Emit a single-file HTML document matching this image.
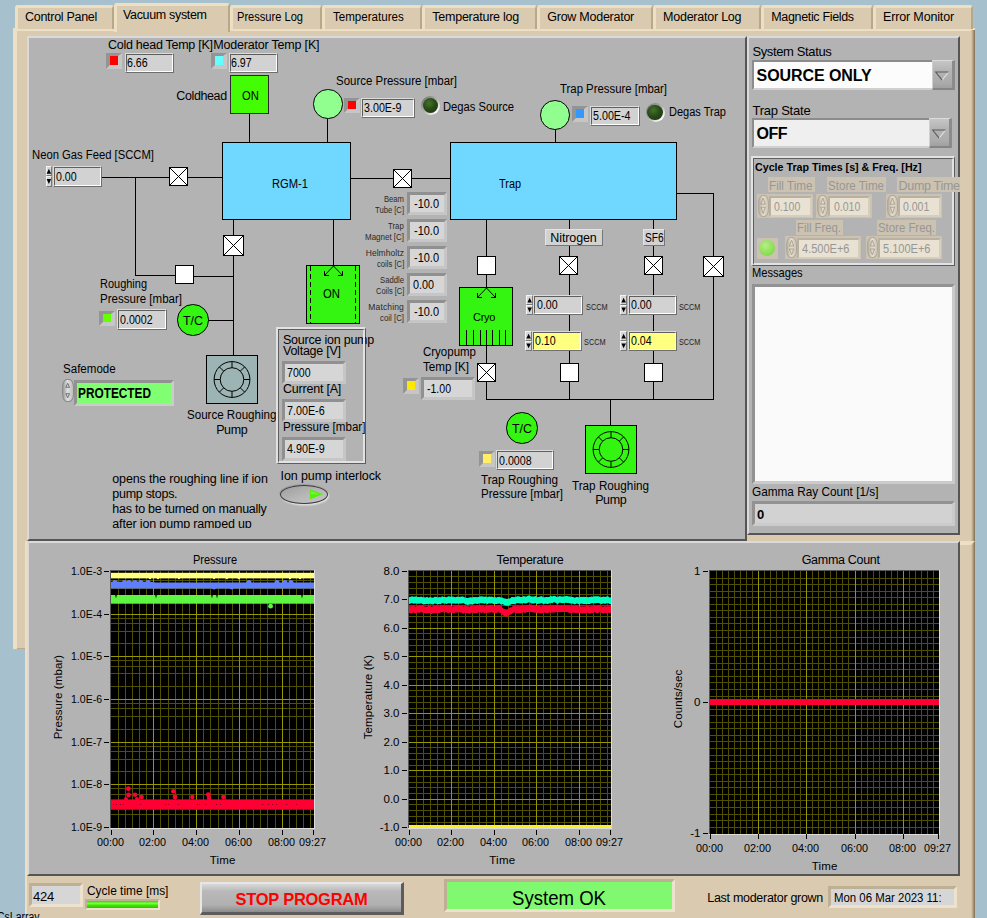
<!DOCTYPE html>
<html><head><meta charset="utf-8"><title>Vacuum system</title>
<style>
html,body{margin:0;padding:0}
body{width:987px;height:918px;overflow:hidden;background:#a6c0ce;position:relative;font-family:"Liberation Sans",sans-serif;font-size:12px;color:#000}
#root{position:absolute;left:0;top:0;width:987px;height:918px;overflow:hidden}
#root div{position:absolute;box-sizing:border-box}
.t{white-space:nowrap;line-height:1.2;transform-origin:0 50%;}
svg{position:absolute;overflow:visible}

.fld{background:#d2d2d2;border:1px solid;border-color:#dcdcdc #6e6e6e #6e6e6e #dcdcdc}
.fld>i{position:absolute;left:0;top:0;right:0;bottom:0;border:1px solid;border-color:#5e5e5e #fff #fff #5e5e5e}
.rec{background:#d6d6d6;border:3.5px solid;border-color:#909090 #c6c6c6 #c6c6c6 #909090}
.ind{border:solid;border-width:3.8px 4.1px 4px 4.2px;border-color:#949494 #c6c6c6 #c6c6c6 #949494}
.vb{background:#fff;border:1px solid #000}
.tab{background:#dacbb0;border-radius:3px 3px 0 0;border:solid;border-width:3px 2px 0 3px;border-color:#eddfc4 #b9a888 #eddfc4 #eddfc4}
.dis{background:#cbc2b1}
.dfld{background:#e9e1d1;border:1px solid;border-color:#b5ad9e #f2ecdf #f2ecdf #b5ad9e}

</style></head><body><div id="root">
<div style="left:13px;top:28px;width:962px;height:621px;background:linear-gradient(180deg,#dacbb0 0,#dacbb0 616.5px,#bba989 617.5px,#7d6d54 621px);border-left:4px solid #eddfc4;border-top:3px solid #eddfc4"></div>
<div style="left:25px;top:541px;width:950px;height:400px;background:#dacbb0;border-left:2px solid #eddfc4"></div>
<div style="left:960px;top:541px;width:11px;height:4px;background:#eddfc4"></div>
<div style="left:971px;top:30px;width:4px;height:888px;background:linear-gradient(90deg,#dacbb0 0%,#bba989 40%,#7d6d54 100%)"></div>
<svg style="left:0;top:0" width="987" height="918"><path d="M971 541H975L971 545Z" fill="#eddfc4"/></svg>
<div class="tab" style="left:15px;top:5px;width:98.5px;height:23.5px;"></div>
<div class="t" style="top:10.32px;font-size:12.5px;left:25.00px;letter-spacing:-0.287px;">Control Panel</div>
<div class="tab" style="left:229.5px;top:5px;width:92.5px;height:23.5px;"></div>
<div class="t" style="top:10.32px;font-size:12.5px;left:237.00px;transform:scaleX(0.8878);">Pressure Log</div>
<div class="tab" style="left:322px;top:5px;width:100px;height:23.5px;"></div>
<div class="t" style="top:10.32px;font-size:12.5px;left:333.00px;transform:scaleX(0.9252);">Temperatures</div>
<div class="tab" style="left:422px;top:5px;width:115px;height:23.5px;"></div>
<div class="t" style="top:10.32px;font-size:12.5px;left:432.30px;letter-spacing:-0.241px;">Temperature log</div>
<div class="tab" style="left:537px;top:5px;width:116px;height:23.5px;"></div>
<div class="t" style="top:10.32px;font-size:12.5px;left:547.30px;letter-spacing:-0.257px;">Grow Moderator</div>
<div class="tab" style="left:653px;top:5px;width:108px;height:23.5px;"></div>
<div class="t" style="top:10.32px;font-size:12.5px;left:663.00px;letter-spacing:-0.230px;">Moderator Log</div>
<div class="tab" style="left:761px;top:5px;width:111.5px;height:23.5px;"></div>
<div class="t" style="top:10.32px;font-size:12.5px;left:771.30px;letter-spacing:-0.342px;">Magnetic Fields</div>
<div class="tab" style="left:872.5px;top:5px;width:100.1px;height:23.5px;"></div>
<div class="t" style="top:10.32px;font-size:12.5px;left:883.00px;letter-spacing:-0.148px;">Error Monitor</div>
<div class="tab" style="left:113.5px;top:3px;width:116px;height:28.5px;"></div>
<div class="t" style="top:8.32px;font-size:12.5px;left:123.00px;letter-spacing:-0.330px;">Vacuum system</div>
<div style="left:27px;top:36px;width:720px;height:505px;background:#b3b3b3;border:2px solid;border-color:#dadada #555 #555 #dadada"></div>
<div style="left:747px;top:36px;width:213px;height:499px;background:#b3b3b3;border:2px solid;border-color:#dadada #555 #555 #dadada"></div>
<div style="left:27px;top:541px;width:933px;height:335px;background:#b3b3b3;border:solid;border-width:2px 2px 2px 2px;border-color:#dadada #555 #555 #dadada"></div>
<svg style="left:0;top:0" width="987" height="918" shape-rendering="crispEdges"><g fill="#000"><rect x="249" y="113" width="1" height="29"/><rect x="327" y="118" width="1" height="24"/><rect x="102" y="177" width="120" height="1"/><rect x="135" y="177" width="1" height="99"/><rect x="135" y="275" width="41" height="1"/><rect x="193" y="276" width="41" height="1"/><rect x="233" y="219" width="1" height="136"/><rect x="208" y="320" width="25" height="1"/><rect x="333" y="219" width="1" height="46"/><rect x="351" y="178" width="99" height="1"/><rect x="555" y="129" width="1" height="13"/><rect x="486" y="219" width="1" height="68"/><rect x="486" y="346" width="1" height="54"/><rect x="569" y="219" width="1" height="181"/><rect x="653" y="219" width="1" height="181"/><rect x="677" y="193" width="37" height="1"/><rect x="713" y="193" width="1" height="207"/><rect x="486" y="399" width="228" height="1"/><rect x="610" y="399" width="1" height="26"/></g></svg>
<div style="left:222px;top:142px;width:129px;height:78px;background:#70d8ff;border:1px solid #000"></div>
<div class="t" style="top:176.82px;font-size:12.5px;left:272.00px;transform:scaleX(0.8938);">RGM-1</div>
<div style="left:450px;top:142px;width:227px;height:78px;background:#70d8ff;border:1px solid #000"></div>
<div class="t" style="top:177.02px;font-size:12.5px;left:499.30px;transform:scaleX(0.8718);">Trap</div>
<div style="left:230px;top:75px;width:39px;height:39px;background:#42fd04;border:1px solid #2e262e"></div>
<div class="t" style="top:88.73px;font-size:12.5px;left:241.60px;transform:scaleX(0.8960);">ON</div>
<div class="t" style="top:89.33px;font-size:12.5px;left:176.30px;letter-spacing:-0.389px;">Coldhead</div>
<div class="vb" style="left:169px;top:167px;width:19px;height:19px;"></div>
<svg style="left:169px;top:167px" width="19" height="19"><path d="M1 1L18 18M18 1L1 18" stroke="#000" stroke-width="1" fill="none"/></svg>
<div class="vb" style="left:175px;top:265px;width:19px;height:19px;"></div>
<div class="vb" style="left:223px;top:235px;width:21px;height:21px;"></div>
<svg style="left:223px;top:235px" width="21" height="21"><path d="M1 1L20 20M20 1L1 20" stroke="#000" stroke-width="1" fill="none"/></svg>
<div class="vb" style="left:393px;top:169px;width:19px;height:19px;"></div>
<svg style="left:393px;top:169px" width="19" height="19"><path d="M1 1L18 18M18 1L1 18" stroke="#000" stroke-width="1" fill="none"/></svg>
<div class="vb" style="left:477px;top:256px;width:19px;height:19px;"></div>
<div class="vb" style="left:477px;top:363px;width:19px;height:19px;"></div>
<svg style="left:477px;top:363px" width="19" height="19"><path d="M1 1L18 18M18 1L1 18" stroke="#000" stroke-width="1" fill="none"/></svg>
<div class="vb" style="left:559px;top:256px;width:19px;height:19px;"></div>
<svg style="left:559px;top:256px" width="19" height="19"><path d="M1 1L18 18M18 1L1 18" stroke="#000" stroke-width="1" fill="none"/></svg>
<div class="vb" style="left:644px;top:256px;width:19px;height:19px;"></div>
<svg style="left:644px;top:256px" width="19" height="19"><path d="M1 1L18 18M18 1L1 18" stroke="#000" stroke-width="1" fill="none"/></svg>
<div class="vb" style="left:703px;top:256px;width:21px;height:21px;"></div>
<svg style="left:703px;top:256px" width="21" height="21"><path d="M1 1L20 20M20 1L1 20" stroke="#000" stroke-width="1" fill="none"/></svg>
<div class="vb" style="left:560px;top:363px;width:19px;height:19px;"></div>
<div class="vb" style="left:644px;top:363px;width:19px;height:19px;"></div>
<div style="left:177.2px;top:304.2px;width:31.6px;height:31.6px;background:#33f511;border:1px solid #000;border-radius:50%"></div>
<div class="t" style="top:313.62px;font-size:12.5px;left:182.93px;">T/C</div>
<div style="left:506.2px;top:412.4px;width:31.6px;height:31.6px;background:#33f511;border:1px solid #000;border-radius:50%"></div>
<div class="t" style="top:421.82px;font-size:12.5px;left:511.93px;">T/C</div>
<div class="t" style="top:37.83px;font-size:12.5px;left:108.00px;letter-spacing:-0.269px;">Cold head Temp [K]</div>
<div class="t" style="top:37.83px;font-size:12.5px;left:213.30px;letter-spacing:-0.196px;">Moderator Temp [K]</div>
<div class="ind" style="left:105.6px;top:53.2px;width:16.4px;height:15.6px;background:#ff0000"></div>
<div class="fld" style="left:124.5px;top:52.5px;width:49px;height:20px;"><i></i></div>
<div class="t" style="top:56.12px;font-size:12.5px;left:127.40px;transform:scaleX(0.8509);">6.66</div>
<div class="ind" style="left:211px;top:53.2px;width:16.4px;height:15.6px;background:#66ffff"></div>
<div class="fld" style="left:228.5px;top:52.5px;width:49px;height:20px;"><i></i></div>
<div class="t" style="top:56.12px;font-size:12.5px;left:231.40px;transform:scaleX(0.8509);">6.97</div>
<div class="t" style="top:148.32px;font-size:12.5px;left:32.30px;transform:scaleX(0.9006);">Neon Gas Feed [SCCM]</div>
<div style="left:45.6px;top:166px;width:6.5px;height:10.4px;background:#d6d6d6;border:1px solid;border-color:#f4f4f4 #777 #777 #f4f4f4"></div>
<div style="left:45.6px;top:176.4px;width:6.5px;height:10.4px;background:#d6d6d6;border:1px solid;border-color:#f4f4f4 #777 #777 #f4f4f4"></div>
<svg style="left:0;top:0" width="987" height="918"><path d="M48.9 168.8L51.1 173.8L46.6 173.8ZM48.9 184.0L51.1 179.0L46.6 179.0Z" fill="#000"/></svg>
<div class="fld" style="left:52.7px;top:166px;width:49px;height:20.8px;"><i></i></div>
<div class="t" style="top:170.03px;font-size:12.5px;left:55.50px;transform:scaleX(0.8509);">0.00</div>
<div class="t" style="top:74.33px;font-size:12.5px;left:336.30px;transform:scaleX(0.9168);">Source Pressure [mbar]</div>
<div class="ind" style="left:343.7px;top:97.9px;width:16.4px;height:15.6px;background:#ff0000"></div>
<div class="fld" style="left:361px;top:97.5px;width:54px;height:20px;"><i></i></div>
<div class="t" style="top:101.12px;font-size:12.5px;left:364.30px;transform:scaleX(0.8566);">3.00E-9</div>
<div style="left:421.3px;top:96.1px;width:19px;height:19px;border-radius:50%;background:linear-gradient(135deg,#7d7d7d 15%,#b3b3b3 50%,#fff 85%)"></div>
<div style="left:423.1px;top:97.9px;width:15.4px;height:15.4px;border-radius:50%;background:radial-gradient(circle at 40% 35%,#44742a 0%,#294b18 45%,#19300c 100%)"></div>
<div class="t" style="top:100.33px;font-size:12.5px;left:443.30px;transform:scaleX(0.8964);">Degas Source</div>
<div class="t" style="top:82.33px;font-size:12.5px;left:559.70px;transform:scaleX(0.9097);">Trap Pressure [mbar]</div>
<div class="ind" style="left:571.6px;top:106.3px;width:16.4px;height:15.6px;background:#3399ff"></div>
<div class="fld" style="left:590px;top:105.5px;width:50px;height:20px;"><i></i></div>
<div class="t" style="top:109.12px;font-size:12.5px;left:593.00px;transform:scaleX(0.8566);">5.00E-4</div>
<div style="left:645.5px;top:103px;width:19px;height:19px;border-radius:50%;background:linear-gradient(135deg,#7d7d7d 15%,#b3b3b3 50%,#fff 85%)"></div>
<div style="left:647.3px;top:104.8px;width:15.4px;height:15.4px;border-radius:50%;background:radial-gradient(circle at 40% 35%,#44742a 0%,#294b18 45%,#19300c 100%)"></div>
<div class="t" style="top:105.33px;font-size:12.5px;left:668.70px;transform:scaleX(0.8822);">Degas Trap</div>
<div style="left:313.3px;top:89.3px;width:29.4px;height:29.4px;background:#90ff90;border:1px solid #000;border-radius:50%"></div>
<div style="left:540.1px;top:99.8px;width:29.8px;height:29.8px;background:#90ff90;border:1px solid #000;border-radius:50%"></div>
<div class="t" style="top:276.93px;font-size:12.5px;left:100.00px;transform:scaleX(0.8783);">Roughing</div>
<div class="t" style="top:291.82px;font-size:12.5px;left:100.00px;transform:scaleX(0.9223);">Pressure [mbar]</div>
<div class="ind" style="left:98.9px;top:310.5px;width:16.4px;height:15.6px;background:#66ff00"></div>
<div class="fld" style="left:117.3px;top:309.1px;width:49.4px;height:20.5px;"><i></i></div>
<div class="t" style="top:312.98px;font-size:12.5px;left:120.40px;transform:scaleX(0.8528);">0.0002</div>
<div style="left:206px;top:355px;width:52px;height:49px;background:#9db4b4;border:1px solid #000"></div>
<svg style="left:0;top:0" width="987" height="918"><g fill="none" stroke="#000" stroke-width="1"><circle cx="232" cy="379.5" r="17.9"/><circle cx="232" cy="379.5" r="11.8"/><path d="M243.80 379.50L249.90 379.50M240.34 387.84L244.66 392.16M232.00 391.30L232.00 397.40M223.66 387.84L219.34 392.16M220.20 379.50L214.10 379.50M223.66 371.16L219.34 366.84M232.00 367.70L232.00 361.60M240.34 371.16L244.66 366.84"/></g></svg>
<div class="t" style="top:408.32px;font-size:12.5px;left:187.30px;transform:scaleX(0.9256);">Source Roughing</div>
<div class="t" style="top:423.32px;font-size:12.5px;left:216.20px;letter-spacing:-0.413px;">Pump</div>
<div style="left:585px;top:425px;width:52px;height:49px;background:#33f511;border:1px solid #000"></div>
<svg style="left:0;top:0" width="987" height="918"><g fill="none" stroke="#000" stroke-width="1"><circle cx="611" cy="449.5" r="17.9"/><circle cx="611" cy="449.5" r="11.8"/><path d="M622.80 449.50L628.90 449.50M619.34 457.84L623.66 462.16M611.00 461.30L611.00 467.40M602.66 457.84L598.34 462.16M599.20 449.50L593.10 449.50M602.66 441.16L598.34 436.84M611.00 437.70L611.00 431.60M619.34 441.16L623.66 436.84"/></g></svg>
<div class="t" style="top:478.62px;font-size:12.5px;left:572.20px;transform:scaleX(0.9365);">Trap Roughing</div>
<div class="t" style="top:493.32px;font-size:12.5px;left:595.20px;letter-spacing:-0.413px;">Pump</div>
<div style="left:306px;top:265px;width:54px;height:59px;background:#33f511;border:1px solid #000"></div>
<svg style="left:0;top:0" width="987" height="918"><g fill="none" stroke="#000" stroke-width="1"><path d="M310.5 266V323M355.5 266V323" stroke-dasharray="5 3"/><path d="M333.5 266L324.5 275.5M324.5 275.5V271M324.5 275.5H329M333.5 266L342.5 275.5M342.5 275.5V271M342.5 275.5H338"/></g></svg>
<div class="t" style="top:287.12px;font-size:12.5px;left:323.00px;transform:scaleX(0.9067);">ON</div>
<div style="left:459px;top:287px;width:54px;height:59px;background:#33f511;border:1px solid #000"></div>
<svg style="left:0;top:0" width="987" height="918"><g fill="none" stroke="#000" stroke-width="1"><path d="M466.5 330V346M473.5 330V346M480.5 330V346M486.5 330V346M492.5 330V346M499.5 330V346M505.5 330V346"/><path d="M486.5 288L477.5 297.5M477.5 297.5V293M477.5 297.5H482M486.5 288L495.5 297.5M495.5 297.5V293M495.5 297.5H491"/></g></svg>
<div class="t" style="top:311.21px;font-size:11px;left:473.00px;letter-spacing:-0.306px;">Cryo</div>
<div class="t" style="top:345.32px;font-size:12.5px;left:423.30px;transform:scaleX(0.9192);">Cryopump</div>
<div class="t" style="top:360.32px;font-size:12.5px;left:423.30px;transform:scaleX(0.9327);">Temp [K]</div>
<div class="ind" style="left:403px;top:378px;width:16.4px;height:15.6px;background:#ffe800"></div>
<div class="rec" style="left:420.7px;top:376.7px;width:54px;height:23.6px;"></div>
<div class="t" style="top:382.12px;font-size:12.5px;left:427.00px;transform:scaleX(0.8425);">-1.00</div>
<div class="t" style="top:194.19px;font-size:8.5px;left:384.00px;transform:scaleX(0.9008);color:#2a2a2a;">Beam</div>
<div class="t" style="top:205.48px;font-size:8.5px;left:375.00px;transform:scaleX(0.8984);color:#2a2a2a;">Tube [C]</div>
<div class="rec" style="left:407.3px;top:191.7px;width:40px;height:23.3px;"></div>
<div class="t" style="top:196.97px;font-size:12.5px;left:414.00px;transform:scaleX(0.8776);">-10.0</div>
<div class="t" style="top:221.19px;font-size:8.5px;left:388.30px;transform:scaleX(0.9149);color:#2a2a2a;">Trap</div>
<div class="t" style="top:232.48px;font-size:8.5px;left:365.00px;transform:scaleX(0.9381);color:#2a2a2a;">Magnet [C]</div>
<div class="rec" style="left:407.3px;top:218.7px;width:40px;height:23.3px;"></div>
<div class="t" style="top:223.97px;font-size:12.5px;left:414.00px;transform:scaleX(0.8776);">-10.0</div>
<div class="t" style="top:248.19px;font-size:8.5px;left:365.70px;letter-spacing:0.057px;color:#2a2a2a;">Helmholtz</div>
<div class="t" style="top:259.49px;font-size:8.5px;left:376.70px;transform:scaleX(0.9032);color:#2a2a2a;">coils [C]</div>
<div class="rec" style="left:407.3px;top:245.7px;width:40px;height:23.3px;"></div>
<div class="t" style="top:250.97px;font-size:12.5px;left:414.00px;transform:scaleX(0.8776);">-10.0</div>
<div class="t" style="top:275.19px;font-size:8.5px;left:380.00px;transform:scaleX(0.9068);color:#2a2a2a;">Saddle</div>
<div class="t" style="top:286.49px;font-size:8.5px;left:375.70px;transform:scaleX(0.8812);color:#2a2a2a;">Coils [C]</div>
<div class="rec" style="left:407.3px;top:272.7px;width:40px;height:23.3px;"></div>
<div class="t" style="top:277.97px;font-size:12.5px;left:413.20px;transform:scaleX(0.8633);">0.00</div>
<div class="t" style="top:302.19px;font-size:8.5px;left:368.30px;letter-spacing:0.152px;color:#2a2a2a;">Matching</div>
<div class="t" style="top:313.49px;font-size:8.5px;left:380.00px;transform:scaleX(0.9239);color:#2a2a2a;">coil [C]</div>
<div class="rec" style="left:407.3px;top:299.7px;width:40px;height:23.3px;"></div>
<div class="t" style="top:304.97px;font-size:12.5px;left:414.00px;transform:scaleX(0.8776);">-10.0</div>
<div style="left:545.2px;top:229px;width:57.8px;height:16.7px;background:#d2d2d2;border:1px solid;border-color:#e4e4e4 #777 #777 #e4e4e4"></div>
<div class="t" style="top:230.82px;font-size:12.5px;left:550.30px;letter-spacing:-0.106px;">Nitrogen</div>
<div style="left:642.6px;top:229px;width:22.4px;height:16.7px;background:#d2d2d2;border:1px solid;border-color:#e4e4e4 #777 #777 #e4e4e4"></div>
<div class="t" style="top:230.82px;font-size:12.5px;left:644.60px;transform:scaleX(0.8114);">SF6</div>
<div style="left:526.3px;top:295px;width:6.7px;height:10px;background:#d6d6d6;border:1px solid;border-color:#f4f4f4 #777 #777 #f4f4f4"></div>
<div style="left:526.3px;top:305px;width:6.7px;height:10px;background:#d6d6d6;border:1px solid;border-color:#f4f4f4 #777 #777 #f4f4f4"></div>
<svg style="left:0;top:0" width="987" height="918"><path d="M529.6 297.8L531.9 302.4L527.4 302.4ZM529.6 312.2L531.9 307.6L527.4 307.6Z" fill="#000"/></svg>
<div class="fld" style="left:533.4px;top:294.5px;width:49.5px;height:20.7px;"><i></i></div>
<div class="t" style="top:298.48px;font-size:12.5px;left:536.50px;transform:scaleX(0.8509);">0.00</div>
<div class="t" style="top:301.88px;font-size:8.5px;left:585.80px;transform:scaleX(0.8631);color:#222;">SCCM</div>
<div style="left:525.2px;top:331px;width:6.7px;height:10px;background:#d6d6d6;border:1px solid;border-color:#f4f4f4 #777 #777 #f4f4f4"></div>
<div style="left:525.2px;top:341px;width:6.7px;height:10px;background:#d6d6d6;border:1px solid;border-color:#f4f4f4 #777 #777 #f4f4f4"></div>
<svg style="left:0;top:0" width="987" height="918"><path d="M528.6 333.8L530.9 338.4L526.3 338.4ZM528.6 348.2L530.9 343.6L526.3 343.6Z" fill="#000"/></svg>
<div class="fld" style="left:532.3px;top:330.5px;width:49.5px;height:20.7px;background:#ffff80"><i></i></div>
<div class="t" style="top:334.48px;font-size:12.5px;left:535.40px;transform:scaleX(0.8509);">0.10</div>
<div class="t" style="top:337.19px;font-size:8.5px;left:583.60px;transform:scaleX(0.8631);color:#222;">SCCM</div>
<div style="left:620.3px;top:295px;width:6.7px;height:10px;background:#d6d6d6;border:1px solid;border-color:#f4f4f4 #777 #777 #f4f4f4"></div>
<div style="left:620.3px;top:305px;width:6.7px;height:10px;background:#d6d6d6;border:1px solid;border-color:#f4f4f4 #777 #777 #f4f4f4"></div>
<svg style="left:0;top:0" width="987" height="918"><path d="M623.6 297.8L625.9 302.4L621.4 302.4ZM623.6 312.2L625.9 307.6L621.4 307.6Z" fill="#000"/></svg>
<div class="fld" style="left:627.5px;top:294.5px;width:49.3px;height:20.7px;"><i></i></div>
<div class="t" style="top:298.48px;font-size:12.5px;left:630.60px;transform:scaleX(0.8509);">0.00</div>
<div class="t" style="top:301.58px;font-size:8.5px;left:678.70px;transform:scaleX(0.8551);color:#222;">SCCM</div>
<div style="left:620.3px;top:331px;width:6.7px;height:10px;background:#d6d6d6;border:1px solid;border-color:#f4f4f4 #777 #777 #f4f4f4"></div>
<div style="left:620.3px;top:341px;width:6.7px;height:10px;background:#d6d6d6;border:1px solid;border-color:#f4f4f4 #777 #777 #f4f4f4"></div>
<svg style="left:0;top:0" width="987" height="918"><path d="M623.6 333.8L625.9 338.4L621.4 338.4ZM623.6 348.2L625.9 343.6L621.4 343.6Z" fill="#000"/></svg>
<div class="fld" style="left:627.5px;top:330.5px;width:49.3px;height:20.7px;background:#ffff80"><i></i></div>
<div class="t" style="top:334.48px;font-size:12.5px;left:630.60px;transform:scaleX(0.8509);">0.04</div>
<div class="t" style="top:337.19px;font-size:8.5px;left:678.70px;transform:scaleX(0.8551);color:#222;">SCCM</div>
<div class="ind" style="left:479px;top:451px;width:16.4px;height:15.6px;background:#ffee66"></div>
<div class="fld" style="left:495.7px;top:450px;width:58.5px;height:20.3px;"><i></i></div>
<div class="t" style="top:453.77px;font-size:12.5px;left:498.70px;transform:scaleX(0.8528);">0.0008</div>
<div class="t" style="top:472.62px;font-size:12.5px;left:480.70px;transform:scaleX(0.9365);">Trap Roughing</div>
<div class="t" style="top:487.02px;font-size:12.5px;left:480.70px;transform:scaleX(0.9223);">Pressure [mbar]</div>
<div class="t" style="top:362.02px;font-size:12.5px;left:63.30px;transform:scaleX(0.9249);">Safemode</div>
<div style="left:62px;top:378.7px;width:11.5px;height:23.5px;background:linear-gradient(90deg,#9a9a9a,#e0e0e0 45%,#bdbdbd);border-radius:5px/8px;border:1px solid #8a8a8a"></div>
<svg style="left:0;top:0" width="987" height="918"><path d="M67.7 383.3L69.5 387.3H65.9ZM67.7 397.7L69.5 393.7H65.9Z" fill="none" stroke="#555" stroke-width="0.8"/></svg>
<div style="left:74px;top:380px;width:99.5px;height:25.5px;background:#80ff72;border:3px solid;border-color:#929292 #cbcbcb #cbcbcb #929292"></div>
<div class="t" style="top:385.14px;font-size:14px;left:78.30px;transform:scaleX(0.8455);font-weight:bold;">PROTECTED</div>
<div style="left:276px;top:327px;width:90px;height:136.7px;border:solid;border-width:2px 1px 1px 2px;border-color:#e2e2e2 #5e5e5e #5e5e5e #e2e2e2"></div>
<div style="left:278px;top:329px;width:87px;height:133.7px;border:solid;border-width:1px 2px 2px 1px;border-color:#5e5e5e #e2e2e2 #e2e2e2 #5e5e5e"></div>
<div class="t" style="top:332.52px;font-size:12.5px;left:283.00px;letter-spacing:-0.233px;">Source ion pump</div>
<div class="t" style="top:344.32px;font-size:12.5px;left:283.00px;letter-spacing:-0.242px;">Voltage [V]</div>
<div style="left:363px;top:333px;width:2px;height:12px;background:#e2e2e2"></div>
<div class="rec" style="left:282.4px;top:360.7px;width:63.4px;height:23.5px;"></div>
<div class="t" style="top:366.07px;font-size:12.5px;left:287.40px;transform:scaleX(0.8452);">7000</div>
<div class="t" style="top:382.32px;font-size:12.5px;left:283.00px;letter-spacing:-0.221px;">Current [A]</div>
<div class="rec" style="left:282.4px;top:398.8px;width:63.4px;height:23.5px;"></div>
<div class="t" style="top:404.18px;font-size:12.5px;left:287.40px;transform:scaleX(0.8589);">7.00E-6</div>
<div class="t" style="top:420.02px;font-size:12.5px;left:283.00px;transform:scaleX(0.9268);">Pressure [mbar]</div>
<div class="rec" style="left:282.4px;top:437px;width:63.4px;height:23.5px;"></div>
<div class="t" style="top:442.38px;font-size:12.5px;left:287.40px;transform:scaleX(0.8589);">4.90E-9</div>
<div class="t" style="top:469.43px;font-size:12.5px;left:280.50px;letter-spacing:-0.090px;">Ion pump interlock</div>
<div style="left:280px;top:485px;width:48px;height:19px;border-radius:50%;background:linear-gradient(160deg,#a2a2a2 10%,#b8b8b8 55%,#c6c6c6 100%);border:1.3px solid #3c3c3c;box-shadow:1.2px 1.6px 1.5px #dedede,-0.5px -0.8px 1px #8f8f8f"></div>
<svg style="left:0;top:0" width="987" height="918"><path d="M310 489.3L323 494.3L310 499.3Z" fill="#55ee11"/><path d="M311 491L319 494.2L311 494.2Z" fill="#77f733"/></svg>
<div style="left:0;top:0;width:987px;height:527.6px;overflow:hidden">
<div class="t" style="top:471.62px;font-size:12.5px;left:112.30px;letter-spacing:-0.148px;">opens the roughing line if ion</div>
<div class="t" style="top:486.62px;font-size:12.5px;left:112.30px;letter-spacing:-0.281px;">pump stops.</div>
<div class="t" style="top:501.62px;font-size:12.5px;left:112.30px;letter-spacing:-0.247px;">has to be turned on manually</div>
<div class="t" style="top:516.62px;font-size:12.5px;left:112.30px;letter-spacing:-0.159px;">after ion pump ramped up</div>
</div>
<div class="t" style="top:43.83px;font-size:13px;left:752.40px;letter-spacing:-0.370px;">System Status</div>
<div style="left:752px;top:60px;width:203px;height:29.5px;background:#fcfcfc;border:2px solid;border-color:#8c8c8c #d0d0d0 #d0d0d0 #8c8c8c"></div>
<div style="left:932px;top:60px;width:23px;height:29.5px;background:linear-gradient(180deg,#c6c6c6 0%,#b4b4b4 35%,#acacac 80%,#a0a0a0 100%);border:solid;border-width:1px 3px 2px 1px;border-color:#dcdcdc #8b8b8b #858585 #cfcfcf"></div>
<svg style="left:0;top:0" width="987" height="918"><path d="M948.5 72.0L942.1 80.1" stroke="#e2e2e2" stroke-width="1.1" fill="none"/><path d="M948.5 72.0H935.7L942.1 80.1" fill="none" stroke="#5c5c5c" stroke-width="1.1"/></svg>
<div class="t" style="top:66.31px;font-size:16px;left:756.60px;letter-spacing:-0.080px;font-weight:bold;">SOURCE ONLY</div>
<div class="t" style="top:102.93px;font-size:13px;left:752.40px;letter-spacing:-0.221px;">Trap State</div>
<div style="left:752px;top:118px;width:200px;height:29.5px;background:#efefef;border:2px solid;border-color:#8c8c8c #d0d0d0 #d0d0d0 #8c8c8c"></div>
<div style="left:929px;top:118px;width:23px;height:29.5px;background:linear-gradient(180deg,#c6c6c6 0%,#b4b4b4 35%,#acacac 80%,#a0a0a0 100%);border:solid;border-width:1px 3px 2px 1px;border-color:#dcdcdc #8b8b8b #858585 #cfcfcf"></div>
<svg style="left:0;top:0" width="987" height="918"><path d="M945.5 130.0L939.1 138.2" stroke="#e2e2e2" stroke-width="1.1" fill="none"/><path d="M945.5 130.0H932.7L939.1 138.2" fill="none" stroke="#5c5c5c" stroke-width="1.1"/></svg>
<div class="t" style="top:124.31px;font-size:16px;left:756.60px;letter-spacing:-0.563px;font-weight:bold;">OFF</div>
<div style="left:751px;top:156px;width:204px;height:110px;border:solid;border-width:2px 1px 1px 2px;border-color:#e2e2e2 #5e5e5e #5e5e5e #e2e2e2"></div>
<div style="left:753px;top:158px;width:201px;height:107px;border:solid;border-width:1px 2px 2px 1px;border-color:#5e5e5e #e2e2e2 #e2e2e2 #5e5e5e"></div>
<div class="t" style="top:160.81px;font-size:11.5px;left:755.00px;transform:scaleX(0.9283);font-weight:bold;">Cycle Trap Times [s] &amp; Freq. [Hz]</div>
<div class="dis" style="left:768px;top:177.2px;width:46.8px;height:15.2px;"></div>
<div class="t" style="top:179.43px;font-size:12.5px;left:769.30px;transform:scaleX(0.9350);color:#979797;">Fill Time</div>
<div class="dis" style="left:827px;top:177.2px;width:58.9px;height:15.2px;"></div>
<div class="t" style="top:179.43px;font-size:12.5px;left:828.30px;transform:scaleX(0.9266);color:#979797;">Store Time</div>
<div class="dis" style="left:897.3px;top:177.2px;width:62.7px;height:15.2px;"></div>
<div class="t" style="top:179.43px;font-size:12.5px;left:898.60px;letter-spacing:-0.322px;color:#979797;">Dump Time</div>
<div class="dis" style="left:756.6px;top:193.5px;width:56.4px;height:24.5px;"></div>
<div style="left:757.6px;top:194.5px;width:11px;height:22.5px;background:linear-gradient(90deg,#b5ad9d,#e6decd 45%,#cfc6b5);border-radius:5px/8px;border:1px solid #b0a898"></div>
<svg style="left:0;top:0" width="987" height="918"><path d="M763.1 198.0L765.3 204.2H760.9ZM763.1 213.5L765.3 207.2H760.9Z" fill="none" stroke="#a0988a" stroke-width="0.8"/></svg>
<div style="left:769.2px;top:195.5px;width:42.9px;height:21.6px;border:2.5px solid;border-color:#b9b1a1 #d6cebd #d6cebd #b9b1a1;background:#e9e1d1"></div>
<div class="t" style="top:200.12px;font-size:12.5px;left:774.40px;transform:scaleX(0.8409);color:#979797;">0.100</div>
<div class="dis" style="left:816.3px;top:193.5px;width:55.3px;height:24.5px;"></div>
<div style="left:817.3px;top:194.5px;width:11px;height:22.5px;background:linear-gradient(90deg,#b5ad9d,#e6decd 45%,#cfc6b5);border-radius:5px/8px;border:1px solid #b0a898"></div>
<svg style="left:0;top:0" width="987" height="918"><path d="M822.8 198.0L825.0 204.2H820.6ZM822.8 213.5L825.0 207.2H820.6Z" fill="none" stroke="#a0988a" stroke-width="0.8"/></svg>
<div style="left:828.3px;top:195.5px;width:42.2px;height:21.6px;border:2.5px solid;border-color:#b9b1a1 #d6cebd #d6cebd #b9b1a1;background:#e9e1d1"></div>
<div class="t" style="top:200.12px;font-size:12.5px;left:833.50px;transform:scaleX(0.8409);color:#979797;">0.010</div>
<div class="dis" style="left:885.9px;top:193.5px;width:56.4px;height:24.5px;"></div>
<div style="left:886.9px;top:194.5px;width:11px;height:22.5px;background:linear-gradient(90deg,#b5ad9d,#e6decd 45%,#cfc6b5);border-radius:5px/8px;border:1px solid #b0a898"></div>
<svg style="left:0;top:0" width="987" height="918"><path d="M892.4 198.0L894.6 204.2H890.2ZM892.4 213.5L894.6 207.2H890.2Z" fill="none" stroke="#a0988a" stroke-width="0.8"/></svg>
<div style="left:898.1px;top:195.5px;width:42.7px;height:21.6px;border:2.5px solid;border-color:#b9b1a1 #d6cebd #d6cebd #b9b1a1;background:#e9e1d1"></div>
<div class="t" style="top:200.12px;font-size:12.5px;left:903.30px;transform:scaleX(0.8409);color:#979797;">0.001</div>
<div class="dis" style="left:795.8px;top:220.2px;width:47.3px;height:14.5px;"></div>
<div class="t" style="top:221.07px;font-size:12.5px;left:797.10px;transform:scaleX(0.9051);color:#979797;">Fill Freq.</div>
<div class="dis" style="left:876.5px;top:220.2px;width:59.1px;height:14.5px;"></div>
<div class="t" style="top:221.07px;font-size:12.5px;left:877.80px;transform:scaleX(0.9117);color:#979797;">Store Freq.</div>
<div class="dis" style="left:756.6px;top:238px;width:21.4px;height:20.8px;"></div>
<div style="left:759.3px;top:240.1px;width:16px;height:16px;border-radius:50%;background:radial-gradient(circle at 40% 35%,#b4ee88 0%,#8fe058 55%,#7ccc4a 100%)"></div>
<div class="dis" style="left:785.1px;top:235.8px;width:75.8px;height:23.4px;"></div>
<div style="left:786.1px;top:236.8px;width:11px;height:21.4px;background:linear-gradient(90deg,#b5ad9d,#e6decd 45%,#cfc6b5);border-radius:5px/8px;border:1px solid #b0a898"></div>
<svg style="left:0;top:0" width="987" height="918"><path d="M791.6 240.3L793.8 246.0H789.4ZM791.6 254.7L793.8 249.0H789.4Z" fill="none" stroke="#a0988a" stroke-width="0.8"/></svg>
<div style="left:797.1px;top:237.8px;width:62.5px;height:21.2px;border:2.5px solid;border-color:#b9b1a1 #d6cebd #d6cebd #b9b1a1;background:#e9e1d1"></div>
<div class="t" style="top:242.22px;font-size:12.5px;left:802.30px;transform:scaleX(0.8818);color:#979797;">4.500E+6</div>
<div class="dis" style="left:865.8px;top:235.8px;width:76.5px;height:23.4px;"></div>
<div style="left:866.8px;top:236.8px;width:11px;height:21.4px;background:linear-gradient(90deg,#b5ad9d,#e6decd 45%,#cfc6b5);border-radius:5px/8px;border:1px solid #b0a898"></div>
<svg style="left:0;top:0" width="987" height="918"><path d="M872.3 240.3L874.5 246.0H870.1ZM872.3 254.7L874.5 249.0H870.1Z" fill="none" stroke="#a0988a" stroke-width="0.8"/></svg>
<div style="left:878px;top:237.8px;width:62.8px;height:21.2px;border:2.5px solid;border-color:#b9b1a1 #d6cebd #d6cebd #b9b1a1;background:#e9e1d1"></div>
<div class="t" style="top:242.22px;font-size:12.5px;left:883.20px;transform:scaleX(0.8818);color:#979797;">5.100E+6</div>
<div class="t" style="top:264.73px;font-size:13px;left:752.40px;transform:scaleX(0.8541);">Messages</div>
<div style="left:752.3px;top:283.5px;width:202.5px;height:200px;background:#fafafa;border:3px solid;border-color:#929292 #cbcbcb #cbcbcb #929292"></div>
<div class="t" style="top:484.23px;font-size:13px;left:752.40px;transform:scaleX(0.9065);">Gamma Ray Count [1/s]</div>
<div style="left:752.3px;top:501px;width:202.5px;height:25px;background:#d2d2d2;border:3px solid;border-color:#929292 #cbcbcb #cbcbcb #929292"></div>
<div class="t" style="top:506.63px;font-size:13px;left:757.00px;font-weight:bold;">0</div>
<div style="left:29.4px;top:883.4px;width:53.6px;height:23.8px;background:#d6d6d6;border:3px solid;border-color:#bdb095 #ece2cd #ece2cd #bdb095"></div>
<div class="t" style="top:889.13px;font-size:13px;left:33.00px;letter-spacing:-0.229px;">424</div>
<div class="t" style="top:883.33px;font-size:13px;left:86.60px;transform:scaleX(0.9163);">Cycle time [ms]</div>
<div style="left:85.1px;top:899px;width:75px;height:10.5px;background:linear-gradient(180deg,#3bd400 0%,#7dff4d 35%,#44e600 60%,#2fc000 100%);border:2.5px solid;border-color:#bdb095 #ece2cd #ece2cd #bdb095"></div>
<div style="left:200px;top:882px;width:204px;height:32.5px;background:linear-gradient(180deg,#d9d9d9 0%,#b9b9b9 25%,#b0b0b0 75%,#8c8c8c 100%);border:solid;border-width:2px 3px 3px 2px;border-color:#e6e6e6 #5c5c5c #5c5c5c #e6e6e6"></div>
<div class="t" style="top:890.26px;font-size:16.5px;left:235.50px;letter-spacing:-0.256px;font-weight:bold;color:#ff0000;">STOP PROGRAM</div>
<div style="left:444px;top:878.7px;width:231px;height:33.5px;background:#80f870;border:3px solid;border-color:#bdb095 #ece2cd #ece2cd #bdb095"></div>
<div class="t" style="top:886.40px;font-size:20px;left:512.30px;transform:scaleX(0.9295);">System OK</div>
<div class="t" style="top:891.33px;font-size:12.5px;left:707.30px;letter-spacing:-0.294px;">Last moderator grown</div>
<div style="left:828px;top:886px;width:129px;height:21.7px;background:#d6d6d6;border:3px solid;border-color:#bdb095 #ece2cd #ece2cd #bdb095"></div>
<div class="t" style="top:890.53px;font-size:12.5px;left:833.70px;transform:scaleX(0.9128);">Mon 06 Mar 2023 11:</div>
<div class="t" style="top:910.33px;font-size:12.5px;left:-3.00px;transform:scaleX(0.8383);">CsI array</div>
<svg style="left:0;top:0" width="987" height="918" shape-rendering="crispEdges"><rect x="111" y="571" width="203" height="257" fill="#000"/><g fill="#505000"><rect x="118" y="571" width="1" height="257"/><rect x="125" y="571" width="1" height="257"/><rect x="132" y="571" width="1" height="257"/><rect x="139" y="571" width="1" height="257"/><rect x="146" y="571" width="1" height="257"/><rect x="160" y="571" width="1" height="257"/><rect x="168" y="571" width="1" height="257"/><rect x="175" y="571" width="1" height="257"/><rect x="182" y="571" width="1" height="257"/><rect x="189" y="571" width="1" height="257"/><rect x="203" y="571" width="1" height="257"/><rect x="210" y="571" width="1" height="257"/><rect x="218" y="571" width="1" height="257"/><rect x="225" y="571" width="1" height="257"/><rect x="232" y="571" width="1" height="257"/><rect x="246" y="571" width="1" height="257"/><rect x="253" y="571" width="1" height="257"/><rect x="260" y="571" width="1" height="257"/><rect x="267" y="571" width="1" height="257"/><rect x="275" y="571" width="1" height="257"/><rect x="289" y="571" width="1" height="257"/><rect x="296" y="571" width="1" height="257"/><rect x="303" y="571" width="1" height="257"/><rect x="310" y="571" width="1" height="257"/><rect x="111" y="601" width="203" height="1"/><rect x="111" y="588" width="203" height="1"/><rect x="111" y="580" width="203" height="1"/><rect x="111" y="575" width="203" height="1"/><rect x="111" y="643" width="203" height="1"/><rect x="111" y="631" width="203" height="1"/><rect x="111" y="623" width="203" height="1"/><rect x="111" y="618" width="203" height="1"/><rect x="111" y="686" width="203" height="1"/><rect x="111" y="673" width="203" height="1"/><rect x="111" y="666" width="203" height="1"/><rect x="111" y="660" width="203" height="1"/><rect x="111" y="729" width="203" height="1"/><rect x="111" y="716" width="203" height="1"/><rect x="111" y="708" width="203" height="1"/><rect x="111" y="703" width="203" height="1"/><rect x="111" y="771" width="203" height="1"/><rect x="111" y="759" width="203" height="1"/><rect x="111" y="751" width="203" height="1"/><rect x="111" y="746" width="203" height="1"/><rect x="111" y="814" width="203" height="1"/><rect x="111" y="801" width="203" height="1"/><rect x="111" y="794" width="203" height="1"/><rect x="111" y="788" width="203" height="1"/></g><g fill="#969600"><rect x="153" y="571" width="1" height="257"/><rect x="196" y="571" width="1" height="257"/><rect x="239" y="571" width="1" height="257"/><rect x="282" y="571" width="1" height="257"/><rect x="111" y="614" width="203" height="1"/><rect x="111" y="656" width="203" height="1"/><rect x="111" y="699" width="203" height="1"/><rect x="111" y="742" width="203" height="1"/><rect x="111" y="784" width="203" height="1"/></g><g shape-rendering="auto"><rect x="111" y="572.8" width="203" height="5.6" fill="#ffff80"/><circle cx="150" cy="578" r="1.2" fill="#ffff80"/><circle cx="158" cy="578" r="1.2" fill="#ffff80"/><circle cx="179" cy="578" r="1.2" fill="#ffff80"/><circle cx="214" cy="578" r="1.2" fill="#ffff80"/><circle cx="227" cy="578" r="1.2" fill="#ffff80"/><circle cx="238.7" cy="578" r="1.2" fill="#ffff80"/><circle cx="290" cy="578" r="1.2" fill="#ffff80"/><circle cx="300" cy="578" r="1.2" fill="#ffff80"/><path d="M111 581.7H150L156 582.5H314V588.5H111Z" fill="#5f7fff"/><circle cx="115" cy="582.5" r="2.5" fill="#5f7fff"/><circle cx="124.5" cy="582.5" r="2.5" fill="#5f7fff"/><circle cx="129" cy="582.5" r="2.5" fill="#5f7fff"/><circle cx="135" cy="582.5" r="2.5" fill="#5f7fff"/><circle cx="140.8" cy="582.5" r="2.5" fill="#5f7fff"/><circle cx="148" cy="582.5" r="2.5" fill="#5f7fff"/><circle cx="249" cy="582.5" r="2.5" fill="#5f7fff"/><circle cx="277" cy="582.5" r="2.5" fill="#5f7fff"/><circle cx="285" cy="582.5" r="2.5" fill="#5f7fff"/><circle cx="291" cy="582.5" r="2.5" fill="#5f7fff"/><circle cx="214" cy="587.6" r="2" fill="#5f7fff"/><circle cx="231.7" cy="587.6" r="2" fill="#5f7fff"/><rect x="111" y="595" width="203" height="8.7" fill="#5df542"/><path d="M115.2 594.9L116 598.5L116.8 594.9Z" fill="#000"/><path d="M155.2 594.9L156 598.5L156.8 594.9Z" fill="#000"/><path d="M211.2 594.9L212 598.5L212.8 594.9Z" fill="#000"/><path d="M216.2 594.9L217 598.5L217.8 594.9Z" fill="#000"/><path d="M301.2 594.9L302 598.5L302.8 594.9Z" fill="#000"/><rect x="111" y="799.4" width="203" height="10.3" fill="#ff0033"/><rect x="113" y="804" width="0.8" height="0.8" fill="#000" opacity="0.7"/><rect x="116" y="804" width="0.8" height="0.8" fill="#000" opacity="0.7"/><rect x="120" y="804" width="0.8" height="0.8" fill="#000" opacity="0.7"/><rect x="123" y="804" width="0.8" height="0.8" fill="#000" opacity="0.7"/><rect x="140" y="804" width="0.8" height="0.8" fill="#000" opacity="0.7"/><rect x="165" y="804" width="0.8" height="0.8" fill="#000" opacity="0.7"/><rect x="168" y="804" width="0.8" height="0.8" fill="#000" opacity="0.7"/><rect x="178" y="804" width="0.8" height="0.8" fill="#000" opacity="0.7"/><rect x="197" y="804" width="0.8" height="0.8" fill="#000" opacity="0.7"/><rect x="199" y="804" width="0.8" height="0.8" fill="#000" opacity="0.7"/><rect x="205" y="804" width="0.8" height="0.8" fill="#000" opacity="0.7"/><rect x="216" y="804" width="0.8" height="0.8" fill="#000" opacity="0.7"/><rect x="220" y="804" width="0.8" height="0.8" fill="#000" opacity="0.7"/><rect x="262" y="804" width="0.8" height="0.8" fill="#000" opacity="0.7"/><rect x="268" y="804" width="0.8" height="0.8" fill="#000" opacity="0.7"/><rect x="272" y="804" width="0.8" height="0.8" fill="#000" opacity="0.7"/><rect x="276" y="804" width="0.8" height="0.8" fill="#000" opacity="0.7"/><rect x="286" y="804" width="0.8" height="0.8" fill="#000" opacity="0.7"/><rect x="296" y="804" width="0.8" height="0.8" fill="#000" opacity="0.7"/><circle cx="128.3" cy="788.7" r="2.4" fill="#ff0033"/><circle cx="128.5" cy="795" r="2.4" fill="#ff0033"/><circle cx="135" cy="794.7" r="2.3" fill="#ff0033"/><circle cx="141.7" cy="797" r="2.2" fill="#ff0033"/><circle cx="173.3" cy="791.3" r="2.3" fill="#ff0033"/><circle cx="175" cy="797" r="2.4" fill="#ff0033"/><circle cx="192.3" cy="797" r="2.2" fill="#ff0033"/><circle cx="208.3" cy="794.7" r="2.4" fill="#ff0033"/><circle cx="209" cy="798" r="2.2" fill="#ff0033"/><circle cx="223.3" cy="797" r="2.2" fill="#ff0033"/><circle cx="126" cy="799" r="2" fill="#ff0033"/><circle cx="137" cy="799" r="2" fill="#ff0033"/><circle cx="270.6" cy="606.2" r="2.4" fill="#5df542"/></g><rect x="110" y="570" width="204" height="1" fill="#555"/><rect x="110" y="570" width="1" height="258" fill="#555"/><rect x="314" y="570" width="1" height="259" fill="#dcdcdc"/><rect x="110" y="828" width="205" height="1" fill="#dcdcdc"/></svg>
<svg style="left:0;top:0" width="987" height="918" shape-rendering="crispEdges"><g fill="#000"><rect x="111" y="830" width="1" height="5"/><rect x="153" y="830" width="1" height="5"/><rect x="196" y="830" width="1" height="5"/><rect x="239" y="830" width="1" height="5"/><rect x="282" y="830" width="1" height="5"/><rect x="313" y="830" width="1" height="5"/></g></svg>
<div class="t" style="top:836.02px;font-size:11.5px;left:96.60px;transform:scaleX(0.9383);">00:00</div>
<div class="t" style="top:836.02px;font-size:11.5px;left:139.40px;transform:scaleX(0.9383);">02:00</div>
<div class="t" style="top:836.02px;font-size:11.5px;left:182.20px;transform:scaleX(0.9383);">04:00</div>
<div class="t" style="top:836.02px;font-size:11.5px;left:225.00px;transform:scaleX(0.9383);">06:00</div>
<div class="t" style="top:836.02px;font-size:11.5px;left:267.80px;transform:scaleX(0.9383);">08:00</div>
<div class="t" style="top:836.02px;font-size:11.5px;left:299.00px;transform:scaleX(0.9383);">09:27</div>
<svg style="left:0;top:0" width="987" height="918" shape-rendering="crispEdges"><g fill="#000"><rect x="104" y="571" width="5" height="1"/><rect x="104" y="614" width="5" height="1"/><rect x="104" y="656" width="5" height="1"/><rect x="104" y="699" width="5" height="1"/><rect x="104" y="742" width="5" height="1"/><rect x="104" y="784" width="5" height="1"/><rect x="104" y="827" width="5" height="1"/></g></svg>
<div class="t" style="top:564.92px;font-size:11.5px;left:70.50px;transform:scaleX(0.9150);">1.0E-3</div>
<div class="t" style="top:607.62px;font-size:11.5px;left:70.50px;transform:scaleX(0.9150);">1.0E-4</div>
<div class="t" style="top:650.32px;font-size:11.5px;left:70.50px;transform:scaleX(0.9150);">1.0E-5</div>
<div class="t" style="top:693.02px;font-size:11.5px;left:70.50px;transform:scaleX(0.9150);">1.0E-6</div>
<div class="t" style="top:735.72px;font-size:11.5px;left:70.50px;transform:scaleX(0.9150);">1.0E-7</div>
<div class="t" style="top:778.42px;font-size:11.5px;left:70.50px;transform:scaleX(0.9150);">1.0E-8</div>
<div class="t" style="top:821.12px;font-size:11.5px;left:70.50px;transform:scaleX(0.9150);">1.0E-9</div>
<div class="t" style="top:553.33px;font-size:12.5px;left:193.00px;transform:scaleX(0.8797);">Pressure</div>
<div class="t" style="top:854.42px;font-size:11.5px;left:209.70px;letter-spacing:0.218px;">Time</div>
<div class="t" style="left:58.5px;top:697.0px;font-size:11.5px;transform-origin:50% 50%;transform:translate(-50%,-50%) rotate(-90deg);letter-spacing:0.1px">Pressure (mbar)</div>
<svg style="left:0;top:0" width="987" height="918" shape-rendering="crispEdges"><rect x="409" y="571" width="202" height="257" fill="#000"/><g fill="#505000"><rect x="416" y="571" width="1" height="257"/><rect x="423" y="571" width="1" height="257"/><rect x="430" y="571" width="1" height="257"/><rect x="437" y="571" width="1" height="257"/><rect x="444" y="571" width="1" height="257"/><rect x="458" y="571" width="1" height="257"/><rect x="465" y="571" width="1" height="257"/><rect x="472" y="571" width="1" height="257"/><rect x="479" y="571" width="1" height="257"/><rect x="486" y="571" width="1" height="257"/><rect x="501" y="571" width="1" height="257"/><rect x="508" y="571" width="1" height="257"/><rect x="515" y="571" width="1" height="257"/><rect x="522" y="571" width="1" height="257"/><rect x="529" y="571" width="1" height="257"/><rect x="543" y="571" width="1" height="257"/><rect x="550" y="571" width="1" height="257"/><rect x="557" y="571" width="1" height="257"/><rect x="564" y="571" width="1" height="257"/><rect x="571" y="571" width="1" height="257"/><rect x="586" y="571" width="1" height="257"/><rect x="593" y="571" width="1" height="257"/><rect x="600" y="571" width="1" height="257"/><rect x="607" y="571" width="1" height="257"/><rect x="409" y="576" width="202" height="1"/><rect x="409" y="582" width="202" height="1"/><rect x="409" y="588" width="202" height="1"/><rect x="409" y="594" width="202" height="1"/><rect x="409" y="605" width="202" height="1"/><rect x="409" y="611" width="202" height="1"/><rect x="409" y="616" width="202" height="1"/><rect x="409" y="622" width="202" height="1"/><rect x="409" y="633" width="202" height="1"/><rect x="409" y="639" width="202" height="1"/><rect x="409" y="645" width="202" height="1"/><rect x="409" y="651" width="202" height="1"/><rect x="409" y="662" width="202" height="1"/><rect x="409" y="668" width="202" height="1"/><rect x="409" y="673" width="202" height="1"/><rect x="409" y="679" width="202" height="1"/><rect x="409" y="690" width="202" height="1"/><rect x="409" y="696" width="202" height="1"/><rect x="409" y="702" width="202" height="1"/><rect x="409" y="708" width="202" height="1"/><rect x="409" y="719" width="202" height="1"/><rect x="409" y="725" width="202" height="1"/><rect x="409" y="730" width="202" height="1"/><rect x="409" y="736" width="202" height="1"/><rect x="409" y="747" width="202" height="1"/><rect x="409" y="753" width="202" height="1"/><rect x="409" y="759" width="202" height="1"/><rect x="409" y="765" width="202" height="1"/><rect x="409" y="776" width="202" height="1"/><rect x="409" y="782" width="202" height="1"/><rect x="409" y="787" width="202" height="1"/><rect x="409" y="793" width="202" height="1"/><rect x="409" y="804" width="202" height="1"/><rect x="409" y="810" width="202" height="1"/><rect x="409" y="816" width="202" height="1"/><rect x="409" y="822" width="202" height="1"/></g><g fill="#969600"><rect x="451" y="571" width="1" height="257"/><rect x="494" y="571" width="1" height="257"/><rect x="536" y="571" width="1" height="257"/><rect x="579" y="571" width="1" height="257"/><rect x="409" y="599" width="202" height="1"/><rect x="409" y="628" width="202" height="1"/><rect x="409" y="656" width="202" height="1"/><rect x="409" y="685" width="202" height="1"/><rect x="409" y="713" width="202" height="1"/><rect x="409" y="742" width="202" height="1"/><rect x="409" y="770" width="202" height="1"/><rect x="409" y="799" width="202" height="1"/></g><path d="M409.0 606.0L410.5 606.2L412.0 606.1L413.5 605.2L415.0 606.4L416.5 606.3L418.0 605.8L419.6 605.9L421.1 605.2L422.6 605.6L424.1 606.3L425.6 606.5L427.1 606.4L428.6 605.7L430.1 606.0L431.6 607.0L433.1 605.9L434.6 606.1L436.1 605.5L437.6 606.1L439.1 606.3L440.7 605.6L442.2 605.3L443.7 605.5L445.2 605.2L446.7 605.6L448.2 606.2L449.7 605.6L451.2 606.1L452.7 606.4L454.2 606.1L455.7 605.2L457.2 605.6L458.7 605.2L460.3 605.4L461.8 605.5L463.3 606.5L464.8 605.8L466.3 606.2L467.8 605.7L469.3 606.7L470.8 605.7L472.3 605.7L473.8 606.3L475.3 605.8L476.8 606.0L478.3 605.6L479.9 605.3L481.4 606.1L482.9 605.4L484.4 606.4L485.9 605.7L487.4 605.9L488.9 605.7L490.4 605.2L491.9 605.2L493.4 606.2L494.9 606.1L496.4 606.0L497.9 605.3L499.4 605.5L501.0 606.1L502.5 607.8L504.0 609.0L505.5 609.3L507.0 609.5L508.5 608.6L510.0 607.4L511.5 607.2L513.0 606.1L514.5 605.3L516.0 606.2L517.5 605.6L519.0 606.2L520.6 606.0L522.1 605.6L523.6 605.3L525.1 605.8L526.6 605.0L528.1 605.2L529.6 604.3L531.1 604.6L532.6 605.1L534.1 605.5L535.6 605.3L537.1 606.0L538.6 605.5L540.1 606.2L541.7 606.3L543.2 605.7L544.7 605.2L546.2 606.1L547.7 605.8L549.2 605.7L550.7 605.8L552.2 605.5L553.7 605.4L555.2 605.4L556.7 604.6L558.2 605.1L559.7 604.9L561.3 605.4L562.8 605.3L564.3 604.9L565.8 605.3L567.3 605.3L568.8 605.8L570.3 606.2L571.8 605.8L573.3 605.6L574.8 606.0L576.3 605.8L577.8 606.1L579.3 606.4L580.9 606.2L582.4 606.2L583.9 606.4L585.4 606.3L586.9 605.7L588.4 606.0L589.9 606.4L591.4 605.9L592.9 606.3L594.4 605.3L595.9 606.0L597.4 606.0L598.9 605.6L600.4 605.4L602.0 606.4L603.5 606.4L605.0 605.9L606.5 606.4L608.0 605.7L609.5 606.4L611.0 605.5L611.0 612.5L609.5 613.4L608.0 612.6L606.5 613.4L605.0 612.8L603.5 613.6L602.0 613.3L600.4 612.3L598.9 612.6L597.4 613.2L595.9 612.7L594.4 612.3L592.9 613.0L591.4 612.9L589.9 613.7L588.4 613.0L586.9 612.5L585.4 613.4L583.9 613.3L582.4 613.4L580.9 613.1L579.3 613.1L577.8 612.8L576.3 613.0L574.8 613.0L573.3 612.6L571.8 613.1L570.3 613.2L568.8 612.7L567.3 612.0L565.8 612.1L564.3 611.6L562.8 612.1L561.3 612.2L559.7 612.0L558.2 612.2L556.7 611.4L555.2 612.5L553.7 612.6L552.2 612.5L550.7 612.8L549.2 612.6L547.7 612.9L546.2 613.1L544.7 612.4L543.2 612.7L541.7 613.6L540.1 613.3L538.6 612.7L537.1 613.2L535.6 612.4L534.1 612.7L532.6 612.2L531.1 611.7L529.6 611.3L528.1 612.3L526.6 612.2L525.1 612.9L523.6 612.3L522.1 612.7L520.6 613.1L519.0 613.3L517.5 612.8L516.0 613.4L514.5 612.2L513.0 613.0L511.5 614.3L510.0 614.7L508.5 615.4L507.0 616.4L505.5 616.5L504.0 615.9L502.5 615.0L501.0 613.1L499.4 612.7L497.9 612.3L496.4 613.1L494.9 613.4L493.4 613.0L491.9 612.2L490.4 612.5L488.9 612.7L487.4 613.1L485.9 612.5L484.4 613.5L482.9 612.1L481.4 613.4L479.9 612.1L478.3 612.4L476.8 612.9L475.3 613.1L473.8 613.5L472.3 612.6L470.8 613.0L469.3 613.9L467.8 612.9L466.3 613.3L464.8 612.7L463.3 613.8L461.8 612.6L460.3 612.7L458.7 611.9L457.2 612.7L455.7 612.3L454.2 613.3L452.7 613.1L451.2 612.8L449.7 612.5L448.2 613.2L446.7 612.5L445.2 612.3L443.7 612.6L442.2 612.1L440.7 612.4L439.1 613.2L437.6 613.4L436.1 612.8L434.6 613.2L433.1 613.2L431.6 614.2L430.1 612.9L428.6 612.9L427.1 613.2L425.6 613.2L424.1 613.1L422.6 612.8L421.1 612.0L419.6 612.9L418.0 612.6L416.5 613.1L415.0 613.5L413.5 612.2L412.0 613.4L410.5 613.4L409.0 613.1Z" fill="#ff0033" shape-rendering="auto"/><path d="M409.0 597.2L410.5 596.8L412.0 596.2L413.5 596.8L415.0 596.6L416.5 596.5L418.0 597.1L419.6 596.9L421.1 596.4L422.6 597.3L424.1 597.3L425.6 597.5L427.1 596.7L428.6 597.8L430.1 596.9L431.6 597.5L433.1 597.8L434.6 596.7L436.1 596.8L437.6 597.4L439.1 597.0L440.7 597.2L442.2 596.2L443.7 596.9L445.2 596.9L446.7 597.3L448.2 596.3L449.7 596.6L451.2 596.8L452.7 596.4L454.2 597.1L455.7 597.2L457.2 596.6L458.7 597.0L460.3 596.7L461.8 596.4L463.3 596.4L464.8 597.4L466.3 597.8L467.8 597.9L469.3 597.5L470.8 597.2L472.3 597.6L473.8 597.1L475.3 596.9L476.8 597.3L478.3 596.9L479.9 596.4L481.4 596.3L482.9 596.6L484.4 596.7L485.9 596.5L487.4 597.3L488.9 596.5L490.4 596.8L491.9 596.6L493.4 597.2L494.9 597.0L496.4 597.4L497.9 597.0L499.4 596.8L501.0 597.6L502.5 597.5L504.0 598.5L505.5 598.6L507.0 598.9L508.5 598.6L510.0 598.5L511.5 596.9L513.0 597.1L514.5 597.2L516.0 596.8L517.5 596.3L519.0 596.3L520.6 596.9L522.1 596.9L523.6 596.1L525.1 596.4L526.6 596.4L528.1 595.5L529.6 595.4L531.1 596.5L532.6 596.6L534.1 596.6L535.6 596.1L537.1 597.2L538.6 597.1L540.1 596.4L541.7 596.1L543.2 597.3L544.7 597.2L546.2 597.0L547.7 597.1L549.2 597.0L550.7 595.8L552.2 596.5L553.7 595.7L555.2 596.1L556.7 596.9L558.2 596.8L559.7 596.0L561.3 596.6L562.8 596.4L564.3 596.4L565.8 596.0L567.3 596.1L568.8 596.4L570.3 596.6L571.8 597.0L573.3 596.9L574.8 597.8L576.3 596.9L577.8 597.0L579.3 597.6L580.9 596.7L582.4 596.9L583.9 596.8L585.4 597.0L586.9 597.1L588.4 597.2L589.9 597.0L591.4 596.4L592.9 596.7L594.4 596.2L595.9 596.3L597.4 596.3L598.9 596.2L600.4 597.2L602.0 596.9L603.5 596.5L605.0 597.1L606.5 596.4L608.0 596.3L609.5 597.4L611.0 597.3L611.0 604.3L609.5 604.0L608.0 602.9L606.5 603.3L605.0 604.1L603.5 603.3L602.0 603.9L600.4 603.8L598.9 603.0L597.4 603.0L595.9 603.2L594.4 603.2L592.9 603.2L591.4 603.2L589.9 604.1L588.4 604.0L586.9 604.0L585.4 603.9L583.9 603.9L582.4 603.7L580.9 603.4L579.3 604.4L577.8 603.8L576.3 603.6L574.8 604.6L573.3 603.7L571.8 603.6L570.3 603.4L568.8 603.1L567.3 602.9L565.8 602.8L564.3 603.0L562.8 603.2L561.3 603.1L559.7 602.6L558.2 603.7L556.7 603.8L555.2 602.6L553.7 602.3L552.2 603.3L550.7 602.8L549.2 603.5L547.7 603.9L546.2 603.7L544.7 603.7L543.2 604.0L541.7 603.1L540.1 603.4L538.6 603.8L537.1 603.9L535.6 603.1L534.1 603.6L532.6 603.4L531.1 603.5L529.6 602.2L528.1 602.5L526.6 603.3L525.1 603.4L523.6 603.0L522.1 603.5L520.6 603.5L519.0 603.2L517.5 603.0L516.0 603.6L514.5 604.2L513.0 603.9L511.5 604.0L510.0 605.0L508.5 605.7L507.0 605.8L505.5 605.6L504.0 605.0L502.5 604.0L501.0 604.6L499.4 603.6L497.9 603.7L496.4 604.1L494.9 604.1L493.4 603.9L491.9 603.3L490.4 603.4L488.9 603.3L487.4 604.2L485.9 603.2L484.4 603.8L482.9 603.3L481.4 603.2L479.9 602.9L478.3 603.8L476.8 603.9L475.3 603.5L473.8 604.0L472.3 604.4L470.8 604.2L469.3 604.5L467.8 604.9L466.3 604.4L464.8 604.1L463.3 603.1L461.8 603.5L460.3 603.4L458.7 603.7L457.2 603.6L455.7 603.7L454.2 603.6L452.7 603.4L451.2 603.4L449.7 603.2L448.2 603.2L446.7 604.1L445.2 603.5L443.7 603.6L442.2 602.9L440.7 604.3L439.1 603.9L437.6 604.2L436.1 603.8L434.6 603.6L433.1 604.6L431.6 604.2L430.1 603.5L428.6 604.5L427.1 603.7L425.6 604.2L424.1 604.3L422.6 603.9L421.1 603.3L419.6 603.8L418.0 603.8L416.5 603.5L415.0 603.6L413.5 603.7L412.0 603.0L410.5 603.4L409.0 604.2Z" fill="#00ffc0" shape-rendering="auto"/><rect x="409" y="824.7" width="202" height="3.3" fill="#ffee22"/><rect x="408" y="570" width="203" height="1" fill="#555"/><rect x="408" y="570" width="1" height="258" fill="#555"/><rect x="611" y="570" width="1" height="259" fill="#dcdcdc"/><rect x="408" y="828" width="204" height="1" fill="#dcdcdc"/></svg>
<svg style="left:0;top:0" width="987" height="918" shape-rendering="crispEdges"><g fill="#000"><rect x="409" y="830" width="1" height="5"/><rect x="451" y="830" width="1" height="5"/><rect x="494" y="830" width="1" height="5"/><rect x="536" y="830" width="1" height="5"/><rect x="579" y="830" width="1" height="5"/><rect x="610" y="830" width="1" height="5"/></g></svg>
<div class="t" style="top:836.02px;font-size:11.5px;left:394.60px;transform:scaleX(0.9383);">00:00</div>
<div class="t" style="top:836.02px;font-size:11.5px;left:437.10px;transform:scaleX(0.9383);">02:00</div>
<div class="t" style="top:836.02px;font-size:11.5px;left:479.60px;transform:scaleX(0.9383);">04:00</div>
<div class="t" style="top:836.02px;font-size:11.5px;left:522.10px;transform:scaleX(0.9383);">06:00</div>
<div class="t" style="top:836.02px;font-size:11.5px;left:564.60px;transform:scaleX(0.9383);">08:00</div>
<div class="t" style="top:836.02px;font-size:11.5px;left:596.10px;transform:scaleX(0.9383);">09:27</div>
<svg style="left:0;top:0" width="987" height="918" shape-rendering="crispEdges"><g fill="#000"><rect x="402" y="571" width="5" height="1"/><rect x="402" y="599" width="5" height="1"/><rect x="402" y="628" width="5" height="1"/><rect x="402" y="656" width="5" height="1"/><rect x="402" y="685" width="5" height="1"/><rect x="402" y="713" width="5" height="1"/><rect x="402" y="742" width="5" height="1"/><rect x="402" y="770" width="5" height="1"/><rect x="402" y="799" width="5" height="1"/><rect x="402" y="827" width="5" height="1"/></g></svg>
<div class="t" style="top:564.82px;font-size:11.5px;left:383.51px;">8.0</div>
<div class="t" style="top:593.32px;font-size:11.5px;left:383.51px;">7.0</div>
<div class="t" style="top:621.82px;font-size:11.5px;left:383.51px;">6.0</div>
<div class="t" style="top:650.32px;font-size:11.5px;left:383.51px;">5.0</div>
<div class="t" style="top:678.82px;font-size:11.5px;left:383.51px;">4.0</div>
<div class="t" style="top:707.32px;font-size:11.5px;left:383.51px;">3.0</div>
<div class="t" style="top:735.82px;font-size:11.5px;left:383.51px;">2.0</div>
<div class="t" style="top:764.32px;font-size:11.5px;left:383.51px;">1.0</div>
<div class="t" style="top:792.82px;font-size:11.5px;left:383.51px;">0.0</div>
<div class="t" style="top:821.32px;font-size:11.5px;left:379.69px;">-1.0</div>
<div class="t" style="top:553.33px;font-size:12.5px;left:496.50px;letter-spacing:-0.288px;">Temperature</div>
<div class="t" style="top:854.42px;font-size:11.5px;left:489.30px;letter-spacing:0.218px;">Time</div>
<div class="t" style="left:369.0px;top:697.0px;font-size:11.5px;transform-origin:50% 50%;transform:translate(-50%,-50%) rotate(-90deg);letter-spacing:0.1px">Temperature (K)</div>
<svg style="left:0;top:0" width="987" height="918" shape-rendering="crispEdges"><rect x="709.5" y="571" width="229.5" height="263" fill="#000"/><g fill="#505000"><rect x="716" y="571" width="1" height="263"/><rect x="722" y="571" width="1" height="263"/><rect x="728" y="571" width="1" height="263"/><rect x="734" y="571" width="1" height="263"/><rect x="740" y="571" width="1" height="263"/><rect x="746" y="571" width="1" height="263"/><rect x="752" y="571" width="1" height="263"/><rect x="764" y="571" width="1" height="263"/><rect x="770" y="571" width="1" height="263"/><rect x="776" y="571" width="1" height="263"/><rect x="782" y="571" width="1" height="263"/><rect x="788" y="571" width="1" height="263"/><rect x="794" y="571" width="1" height="263"/><rect x="800" y="571" width="1" height="263"/><rect x="812" y="571" width="1" height="263"/><rect x="818" y="571" width="1" height="263"/><rect x="824" y="571" width="1" height="263"/><rect x="830" y="571" width="1" height="263"/><rect x="836" y="571" width="1" height="263"/><rect x="842" y="571" width="1" height="263"/><rect x="848" y="571" width="1" height="263"/><rect x="861" y="571" width="1" height="263"/><rect x="867" y="571" width="1" height="263"/><rect x="873" y="571" width="1" height="263"/><rect x="879" y="571" width="1" height="263"/><rect x="885" y="571" width="1" height="263"/><rect x="891" y="571" width="1" height="263"/><rect x="897" y="571" width="1" height="263"/><rect x="909" y="571" width="1" height="263"/><rect x="915" y="571" width="1" height="263"/><rect x="921" y="571" width="1" height="263"/><rect x="927" y="571" width="1" height="263"/><rect x="933" y="571" width="1" height="263"/><rect x="709.5" y="578" width="229.5" height="1"/><rect x="709.5" y="584" width="229.5" height="1"/><rect x="709.5" y="591" width="229.5" height="1"/><rect x="709.5" y="597" width="229.5" height="1"/><rect x="709.5" y="604" width="229.5" height="1"/><rect x="709.5" y="610" width="229.5" height="1"/><rect x="709.5" y="617" width="229.5" height="1"/><rect x="709.5" y="623" width="229.5" height="1"/><rect x="709.5" y="630" width="229.5" height="1"/><rect x="709.5" y="637" width="229.5" height="1"/><rect x="709.5" y="643" width="229.5" height="1"/><rect x="709.5" y="650" width="229.5" height="1"/><rect x="709.5" y="656" width="229.5" height="1"/><rect x="709.5" y="663" width="229.5" height="1"/><rect x="709.5" y="669" width="229.5" height="1"/><rect x="709.5" y="676" width="229.5" height="1"/><rect x="709.5" y="682" width="229.5" height="1"/><rect x="709.5" y="689" width="229.5" height="1"/><rect x="709.5" y="696" width="229.5" height="1"/><rect x="709.5" y="702" width="229.5" height="1"/><rect x="709.5" y="709" width="229.5" height="1"/><rect x="709.5" y="715" width="229.5" height="1"/><rect x="709.5" y="722" width="229.5" height="1"/><rect x="709.5" y="728" width="229.5" height="1"/><rect x="709.5" y="735" width="229.5" height="1"/><rect x="709.5" y="741" width="229.5" height="1"/><rect x="709.5" y="748" width="229.5" height="1"/><rect x="709.5" y="755" width="229.5" height="1"/><rect x="709.5" y="761" width="229.5" height="1"/><rect x="709.5" y="768" width="229.5" height="1"/><rect x="709.5" y="774" width="229.5" height="1"/><rect x="709.5" y="781" width="229.5" height="1"/><rect x="709.5" y="787" width="229.5" height="1"/><rect x="709.5" y="794" width="229.5" height="1"/><rect x="709.5" y="800" width="229.5" height="1"/><rect x="709.5" y="807" width="229.5" height="1"/><rect x="709.5" y="814" width="229.5" height="1"/><rect x="709.5" y="820" width="229.5" height="1"/><rect x="709.5" y="827" width="229.5" height="1"/></g><g fill="#969600"><rect x="758" y="571" width="1" height="263"/><rect x="806" y="571" width="1" height="263"/><rect x="855" y="571" width="1" height="263"/><rect x="903" y="571" width="1" height="263"/></g><rect x="709.5" y="699" width="230" height="6" fill="#ff0033"/><rect x="708.5" y="570" width="230.5" height="1" fill="#555"/><rect x="708.5" y="570" width="1" height="264" fill="#555"/><rect x="939" y="570" width="1" height="265" fill="#dcdcdc"/><rect x="708.5" y="834" width="231.5" height="1" fill="#dcdcdc"/></svg>
<svg style="left:0;top:0" width="987" height="918" shape-rendering="crispEdges"><g fill="#000"><rect x="710" y="834" width="1" height="5"/><rect x="758" y="834" width="1" height="5"/><rect x="806" y="834" width="1" height="5"/><rect x="855" y="834" width="1" height="5"/><rect x="903" y="834" width="1" height="5"/><rect x="938" y="834" width="1" height="5"/></g></svg>
<div class="t" style="top:842.32px;font-size:11.5px;left:695.60px;transform:scaleX(0.9383);">00:00</div>
<div class="t" style="top:842.32px;font-size:11.5px;left:743.93px;transform:scaleX(0.9383);">02:00</div>
<div class="t" style="top:842.32px;font-size:11.5px;left:792.26px;transform:scaleX(0.9383);">04:00</div>
<div class="t" style="top:842.32px;font-size:11.5px;left:840.59px;transform:scaleX(0.9383);">06:00</div>
<div class="t" style="top:842.32px;font-size:11.5px;left:888.92px;transform:scaleX(0.9383);">08:00</div>
<div class="t" style="top:842.32px;font-size:11.5px;left:923.60px;transform:scaleX(0.9383);">09:27</div>
<svg style="left:0;top:0" width="987" height="918" shape-rendering="crispEdges"><g fill="#000"><rect x="703" y="571" width="5" height="1"/><rect x="703" y="702" width="5" height="1"/><rect x="703" y="833" width="5" height="1"/></g></svg>
<div class="t" style="top:564.92px;font-size:11.5px;left:694.10px;">1</div>
<div class="t" style="top:695.62px;font-size:11.5px;left:694.10px;">0</div>
<div class="t" style="top:827.32px;font-size:11.5px;left:690.28px;">-1</div>
<div class="t" style="top:553.33px;font-size:12.5px;left:801.70px;letter-spacing:-0.298px;">Gamma Count</div>
<div class="t" style="top:860.12px;font-size:11.5px;left:811.70px;letter-spacing:0.218px;">Time</div>
<div class="t" style="left:678.7px;top:699.3px;font-size:11.5px;transform-origin:50% 50%;transform:translate(-50%,-50%) rotate(-90deg);letter-spacing:0.1px">Counts/sec</div>
</div></body></html>
